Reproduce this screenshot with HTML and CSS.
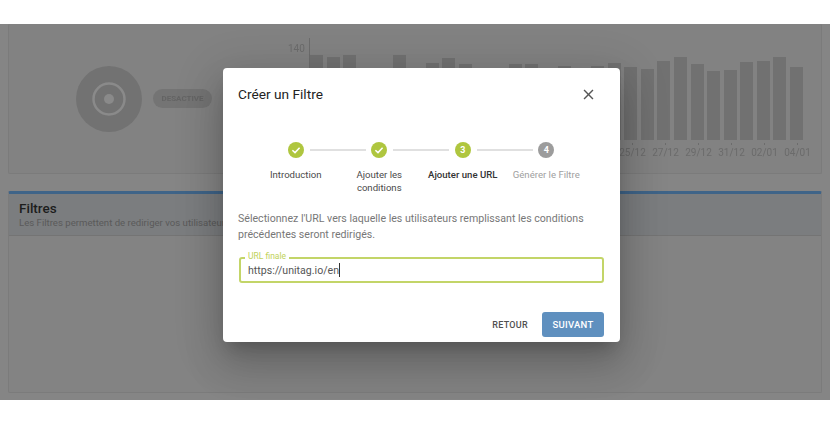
FILE: index.html
```html
<!DOCTYPE html>
<html lang="fr">
<head>
<meta charset="utf-8">
<title>Créer un Filtre</title>
<link rel="stylesheet" href="styles.css">
</head>
<body>
<div class="page">
  <section class="panel stats">
    <div class="donut">
      <svg width="66" height="66" viewBox="0 0 66 66"><circle cx="33" cy="33" r="33" fill="#727272"/><circle cx="33" cy="33" r="15.5" fill="none" stroke="#8a8a8a" stroke-width="2.5"/><circle cx="33" cy="33" r="5" fill="#8a8a8a"/></svg>
    </div>
    <span class="badge">DESACTIVE</span>
    <div class="chart">
      <div class="y-label">140</div>
      <div class="plot">
        <div class="bar" style="height:85px"></div><div class="bar" style="height:83px"></div><div class="bar" style="height:85px"></div><div class="bar" style="height:60px"></div><div class="bar" style="height:60px"></div><div class="bar" style="height:85px"></div><div class="bar" style="height:60px"></div><div class="bar" style="height:77px"></div><div class="bar" style="height:82px"></div><div class="bar" style="height:76px"></div><div class="bar" style="height:60px"></div><div class="bar" style="height:60px"></div><div class="bar" style="height:76px"></div><div class="bar" style="height:76px"></div><div class="bar" style="height:60px"></div><div class="bar" style="height:74px"></div><div class="bar" style="height:60px"></div><div class="bar" style="height:74px"></div><div class="bar" style="height:77px"></div><div class="bar" style="height:73px"></div><div class="bar" style="height:71px"></div><div class="bar" style="height:79px"></div><div class="bar" style="height:83px"></div><div class="bar" style="height:76px"></div><div class="bar" style="height:69px"></div><div class="bar" style="height:70px"></div><div class="bar" style="height:78px"></div><div class="bar" style="height:79px"></div><div class="bar" style="height:83px"></div><div class="bar" style="height:73px"></div>
      </div>
      <div class="x-labels">
        <span>08/12</span><span>10/12</span><span>12/12</span><span>13/12</span><span>15/12</span><span>17/12</span><span>19/12</span><span>21/12</span><span>23/12</span><span>25/12</span><span>27/12</span><span>29/12</span><span>31/12</span><span>02/01</span><span>04/01</span>
      </div>
    </div>
  </section>

  <section class="panel filters">
    <header class="filters-head">
      <h2>Filtres</h2>
      <p>Les Filtres permettent de rediriger vos utilisateurs vers une URL de votre choix.</p>
    </header>
  </section>

  <div class="modal" role="dialog">
    <header class="modal-head">
      <h1>Créer un Filtre</h1>
      <svg class="close" width="17" height="17" viewBox="0 0 24 24"><path d="M19 6.41 17.59 5 12 10.59 6.41 5 5 6.41 10.59 12 5 17.59 6.41 19 12 13.41 17.59 19 19 17.59 13.41 12z" fill="#555"/></svg>
    </header>

    <div class="track">
      <span class="dot done"><svg width="10" height="10" viewBox="0 0 10 10"><path d="M1.4 5.2 4 7.6 8.6 2.7" fill="none" stroke="#fff" stroke-width="1.5"/></svg></span>
      <span class="line"></span>
      <span class="dot done"><svg width="10" height="10" viewBox="0 0 10 10"><path d="M1.4 5.2 4 7.6 8.6 2.7" fill="none" stroke="#fff" stroke-width="1.5"/></svg></span>
      <span class="line"></span>
      <span class="dot done">3</span>
      <span class="line"></span>
      <span class="dot todo">4</span>
    </div>
    <div class="labels">
      <span>Introduction</span>
      <span>Ajouter les conditions</span>
      <span class="current">Ajouter une URL</span>
      <span class="pending">Générer le Filtre</span>
    </div>

    <p class="intro">Sélectionnez l'URL vers laquelle les utilisateurs remplissant les conditions précédentes seront redirigés.</p>

    <div class="field">
      <label class="field-label">URL finale</label>
      <div class="field-value">https://unitag.io/en<span class="caret"></span></div>
    </div>

    <footer class="actions">
      <button class="btn back">RETOUR</button>
      <button class="btn next">SUIVANT</button>
    </footer>
  </div>
</div>
</body>
</html>
```

FILE: styles.css
```css
* { box-sizing: border-box; }
html, body { margin: 0; padding: 0; }
body {
  background: #fff;
  height: 427px;
  overflow: hidden;
  padding-top: 24px;
  font-family: Roboto, "Liberation Sans", sans-serif;
}
.page {
  position: relative;
  height: 376px;
  padding: 0 8px;
  background: #858585;
  overflow: hidden;
}
.panel {
  border: 1px solid #7b7b7b;
  border-radius: 2px;
  background: #828282;
}
.stats {
  display: flex;
  align-items: center;
  height: 150px;
  border-top: 0;
  padding-left: 67px;
}
.donut { display: flex; filter: blur(.6px); }
.badge {
  margin-left: 11px;
  width: 59px;
  height: 19px;
  border-radius: 10px;
  background: #747474;
  color: #646464;
  font-size: 8px;
  font-weight: 700;
  line-height: 19px;
  text-align: center;
  filter: blur(.6px);
}
.chart {
  align-self: flex-start;
  display: grid;
  grid-template-columns: 24px 500px;
  margin: 14px 0 0 73px;
  filter: blur(.5px);
  color: #6b6b6b;
}
.y-label { font-size: 10px; line-height: 12px; padding: 5px 0 0 3px; }
.plot {
  display: flex;
  align-items: flex-end;
  height: 105px;
  padding-bottom: 3px;
  border-left: 1px solid #6c6c6c;
}
.bar { flex: 0 0 13px; margin-right: 3.55px; background: #717171; }
.x-labels {
  grid-column: 2;
  display: flex;
  padding-left: 10px;
  font-size: 10px;
  line-height: 12px;
}
.x-labels span { flex: 0 0 33px; text-align: center; }
.x-labels span::before {
  content: "";
  display: block;
  width: 1px;
  height: 2px;
  margin: 0 auto 2px;
  background: #6c6c6c;
}
.filters {
  margin-top: 17px;
  height: 202px;
  border-top: 3px solid #3f6488;
  background: #838383;
}
.filters-head {
  height: 42px;
  padding: 6px 10px 0;
  background: #7b7d7f;
  border-bottom: 1px solid #747474;
}
.filters-head h2 {
  margin: 0;
  font-size: 13.5px;
  font-weight: 500;
  line-height: 17px;
  color: #1d1d1d;
}
.filters-head p {
  margin: 0;
  font-size: 9.6px;
  line-height: 11px;
  color: #5a5a5a;
}
.modal {
  position: absolute;
  left: 223px;
  top: 44px;
  width: 397px;
  height: 274px;
  padding: 0 16px 0 15px;
  background: #fff;
  border-radius: 4px;
  box-shadow: 0 11px 15px -7px rgba(0,0,0,.2), 0 24px 38px 3px rgba(0,0,0,.14), 0 9px 46px 8px rgba(0,0,0,.12);
}
.modal-head {
  display: flex;
  align-items: center;
  justify-content: space-between;
  height: 52px;
  padding-right: 7px;
}
.modal-head h1 {
  margin: 0;
  font-size: 13.7px;
  font-weight: 400;
  color: #222;
}
.close { display: block; }
.track {
  display: flex;
  align-items: center;
  justify-content: center;
  gap: 5.75px;
  margin-top: 22px;
}
.dot {
  display: flex;
  align-items: center;
  justify-content: center;
  width: 16px;
  height: 16px;
  border-radius: 50%;
  color: #fff;
  font-size: 9px;
  font-weight: 700;
}
.done { background: #afc63f; }
.todo { background: #9c9c9c; }
.line { width: 56px; height: 2px; background: #e0e0e0; }
.labels {
  display: grid;
  grid-template-columns: repeat(4, 83.5px);
  justify-content: center;
  margin-top: 10px;
  height: 26px;
  font-size: 9.6px;
  line-height: 13px;
  text-align: center;
  color: #4a4a4a;
}
.labels span { padding: 0 10px; }
.labels .current { padding: 0; color: #333; font-weight: 500; white-space: nowrap; }
.labels .pending { padding: 0; color: #a0a0a0; white-space: nowrap; }
.intro {
  margin: 17px 0 0;
  font-size: 10.6px;
  line-height: 16px;
  color: #777;
}
.field {
  position: relative;
  height: 26px;
  margin: 14px 0 0 1px;
  border: 2px solid #c3d568;
  border-radius: 3px;
  display: flex;
  align-items: center;
  padding: 1px 0 0 7px;
}
.field-label {
  position: absolute;
  left: 4px;
  top: -8px;
  padding: 0 3px;
  background: #fff;
  color: #bfd25a;
  font-size: 8.5px;
  line-height: 11px;
}
.field-value { font-size: 10.6px; line-height: 16px; color: #555; }
.caret { display: inline-block; width: 1px; height: 14px; background: #333; vertical-align: -3px; }
.actions {
  display: flex;
  justify-content: flex-end;
  align-items: center;
  gap: 14px;
  margin-top: 29px;
}
.btn {
  height: 25px;
  border: 0;
  border-radius: 3px;
  font-family: inherit;
  font-weight: 500;
  letter-spacing: .3px;
  padding: 0;
}
.back { background: none; color: #4f4f4f; font-size: 9px; }
.next { width: 62px; background: #5f90bf; color: #fff; font-size: 9.5px; }
```
